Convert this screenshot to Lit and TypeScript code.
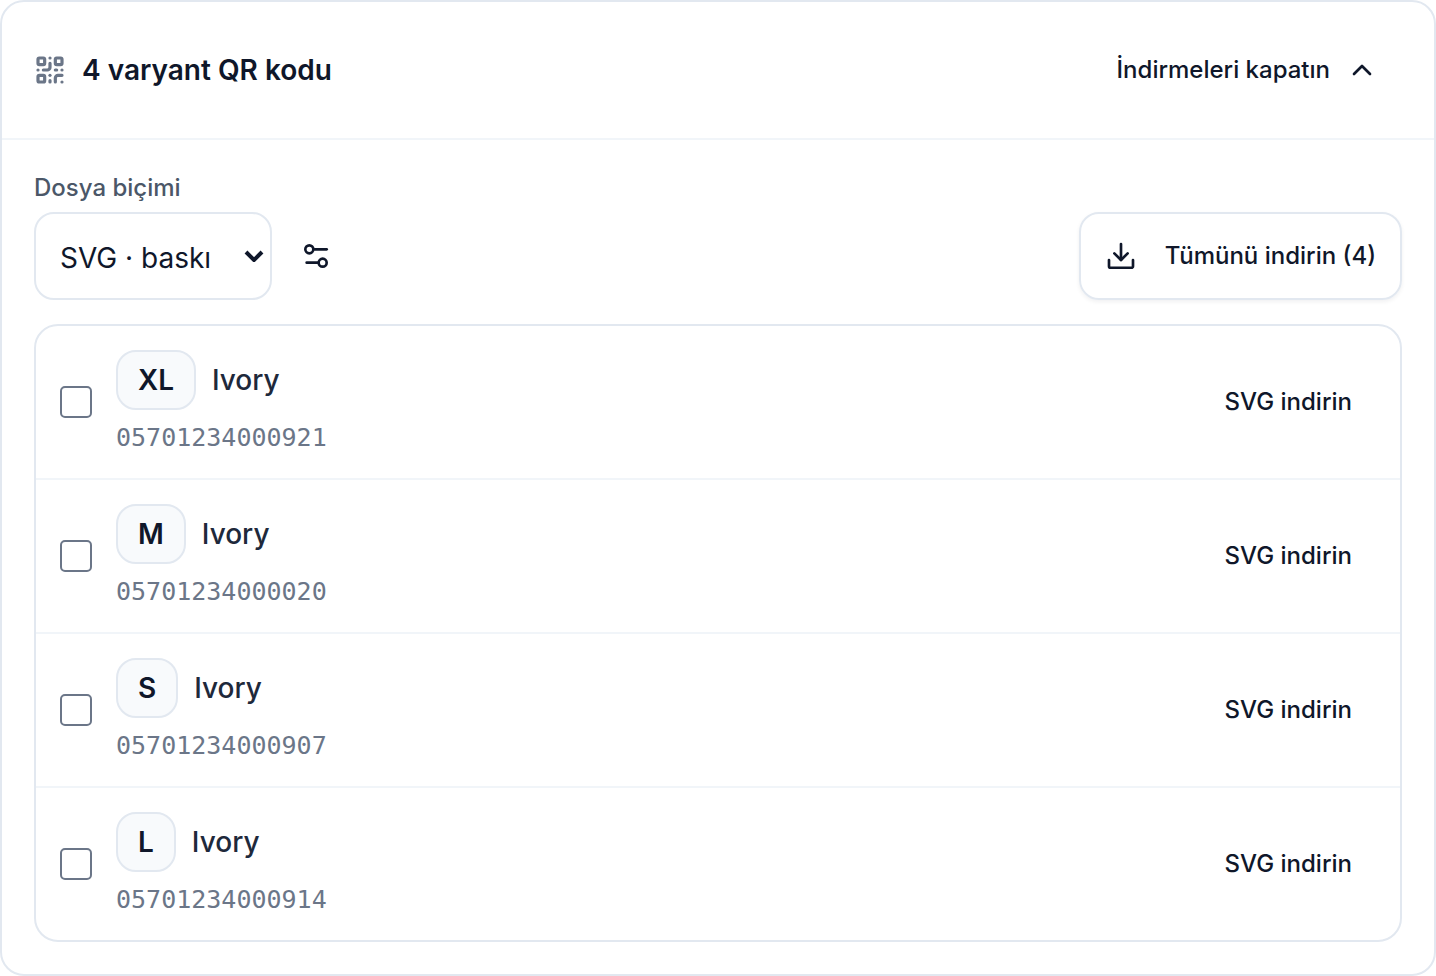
import { LitElement, html, css, svg } from "lit";
import { customElement, state } from "lit/decorators.js";

interface Variant {
  size: string;
  color: string;
  gtin: string;
}

const VARIANTS: Variant[] = [
  { size: "XL", color: "Ivory", gtin: "05701234000921" },
  { size: "M", color: "Ivory", gtin: "05701234000020" },
  { size: "S", color: "Ivory", gtin: "05701234000907" },
  { size: "L", color: "Ivory", gtin: "05701234000914" },
];

const icon = (shapes: unknown, extra = "") => html`
  <svg class="icon ${extra}" viewBox="0 0 24 24" aria-hidden="true">${shapes}</svg>
`;

const qrShapes = svg`
  <rect x="3" y="3" width="5" height="5" rx="1" />
  <rect x="16" y="3" width="5" height="5" rx="1" />
  <rect x="3" y="16" width="5" height="5" rx="1" />
  <path d="M21 16h-3a2 2 0 0 0-2 2v3" />
  <path d="M21 21v.01" />
  <path d="M12 7v3a2 2 0 0 1-2 2H7" />
  <path d="M3 12h.01" />
  <path d="M12 3h.01" />
  <path d="M12 16v.01" />
  <path d="M16 12h1" />
  <path d="M21 12v.01" />
  <path d="M12 21v-1" />`;

const settingsShapes = svg`
  <path d="M20 7h-9" />
  <path d="M14 17H5" />
  <circle cx="17" cy="17" r="3" />
  <circle cx="7" cy="7" r="3" />`;

const downloadShapes = svg`
  <path d="M21 15v4.6a1.2 1.2 0 0 1-1.2 1.2H4.2a1.2 1.2 0 0 1-1.2-1.2V15" />
  <path d="M7 10l5 5 5-5" />
  <path d="M12 15V3" />`;

@customElement("app-root")
export class AppRoot extends LitElement {
  @state() private open = true;

  static styles = css`
    :host {
      display: block;
      font-family: Inter, "Liberation Sans", sans-serif;
      color: #0f172a;
    }
    * {
      box-sizing: border-box;
    }
    button,
    select {
      font: inherit;
      color: inherit;
      background: none;
      border: 0;
      padding: 0;
      margin: 0;
    }
    button {
      cursor: pointer;
    }
    .card {
      background: #fff;
      border: 2px solid #e2e8f0;
      border-radius: 24px;
      overflow: hidden;
    }
    .head {
      display: flex;
      align-items: center;
      justify-content: space-between;
      padding: 24px 32px;
      border-bottom: 2px solid #f1f5f9;
    }
    .title {
      display: flex;
      align-items: center;
      gap: 16px;
      margin: 0;
      font-size: 28px;
      line-height: 40px;
      font-weight: 600;
    }
    .icon {
      display: block;
      flex: none;
      width: 32px;
      height: 32px;
      fill: none;
      stroke: currentColor;
      stroke-width: 2;
      stroke-linecap: round;
      stroke-linejoin: round;
    }
    .muted {
      color: #6b7688;
      stroke-width: 2.4;
    }
    .ghost {
      display: flex;
      align-items: center;
      gap: 16px;
      height: 88px;
      padding: 0 24px;
      font-size: 24px;
      line-height: 32px;
      font-weight: 500;
    }
    .body {
      padding: 32px;
    }
    .toolbar {
      display: flex;
      align-items: flex-end;
      justify-content: space-between;
      margin-bottom: 24px;
    }
    .label {
      display: block;
      margin-bottom: 8px;
      font-size: 24px;
      line-height: 32px;
      font-weight: 500;
      color: #4b5768;
    }
    .row {
      display: flex;
      align-items: center;
    }
    .picker {
      display: grid;
      align-items: center;
      width: 238px;
    }
    .picker > * {
      grid-area: 1 / 1;
    }
    .select {
      appearance: none;
      width: 100%;
      height: 88px;
      padding: 4px 48px 0 24px;
      border: 2px solid #e2e8f0;
      border-radius: 20px;
      font-size: 28px;
    }
    .arrow {
      justify-self: end;
      width: 20px;
      height: 12px;
      margin-right: 8px;
      fill: none;
      stroke: currentColor;
      stroke-width: 4;
      pointer-events: none;
    }
    .square {
      display: grid;
      place-items: center;
      width: 88px;
      height: 88px;
    }
    .outline {
      display: flex;
      align-items: center;
      gap: 28px;
      height: 88px;
      padding: 0 24px;
      border: 2px solid #e2e8f0;
      border-radius: 20px;
      box-shadow: 0 2px 4px rgba(15, 23, 42, 0.06);
      font-size: 24px;
      line-height: 32px;
      font-weight: 500;
    }
    .list {
      list-style: none;
      margin: 0;
      padding: 0;
      border: 2px solid #e2e8f0;
      border-radius: 24px;
    }
    .item {
      display: flex;
      align-items: center;
      gap: 24px;
      padding: 24px;
    }
    .item + .item {
      border-top: 2px solid #f1f5f9;
    }
    .check {
      appearance: none;
      flex: none;
      width: 32px;
      height: 32px;
      margin: 0;
      border: 2px solid #6b7688;
      border-radius: 5px;
      background: #fff;
    }
    .check:checked {
      background: #0f172a;
    }
    .info {
      flex: 1;
      min-width: 0;
    }
    .name {
      display: flex;
      align-items: center;
      gap: 16px;
      font-size: 28px;
      line-height: 40px;
      font-weight: 500;
      color: #1e293b;
    }
    .badge {
      padding: 8px 20px;
      border: 2px solid #e2e8f0;
      border-radius: 20px;
      background: #f8fafc;
      color: #0f172a;
      font-weight: 600;
    }
    .gtin {
      margin-top: 12px;
      font-family: "DejaVu Sans Mono", monospace;
      font-variant-numeric: slashed-zero;
      font-size: 25px;
      line-height: 32px;
      color: #6b7688;
    }
  `;

  render() {
    return html`
      <section class="card">
        <header class="head">
          <h2 class="title">${icon(qrShapes, "muted")}${VARIANTS.length} varyant QR kodu</h2>
          <button class="ghost" aria-expanded=${this.open} @click=${() => (this.open = !this.open)}>
            İndirmeleri kapatın ${icon(svg`<path d="M18 15l-6-6-6 6" />`)}
          </button>
        </header>
        ${this.open ? this.renderBody() : null}
      </section>
    `;
  }

  private renderBody() {
    return html`
      <div class="body">
        <div class="toolbar">
          <div>
            <label class="label" for="format">Dosya biçimi</label>
            <div class="row">
              <div class="picker">
                <select class="select" id="format">
                  <option>SVG · baskı</option>
                  <option>PNG</option>
                </select>
                <svg class="arrow" viewBox="0 0 20 12" aria-hidden="true"><path d="M2 2l8 8 8-8" /></svg>
              </div>
              <button class="square" aria-label="Ayarlar">${icon(settingsShapes)}</button>
            </div>
          </div>
          <button class="outline">${icon(downloadShapes)} Tümünü indirin (${VARIANTS.length})</button>
        </div>
        <ul class="list">
          ${VARIANTS.map(
            (v, i) => html`
              <li class="item">
                <input class="check" type="checkbox" id="v${i}" />
                <label class="info" for="v${i}">
                  <div class="name"><span class="badge">${v.size}</span>${v.color}</div>
                  <div class="gtin">${v.gtin}</div>
                </label>
                <button class="ghost">SVG indirin</button>
              </li>
            `,
          )}
        </ul>
      </div>
    `;
  }
}
